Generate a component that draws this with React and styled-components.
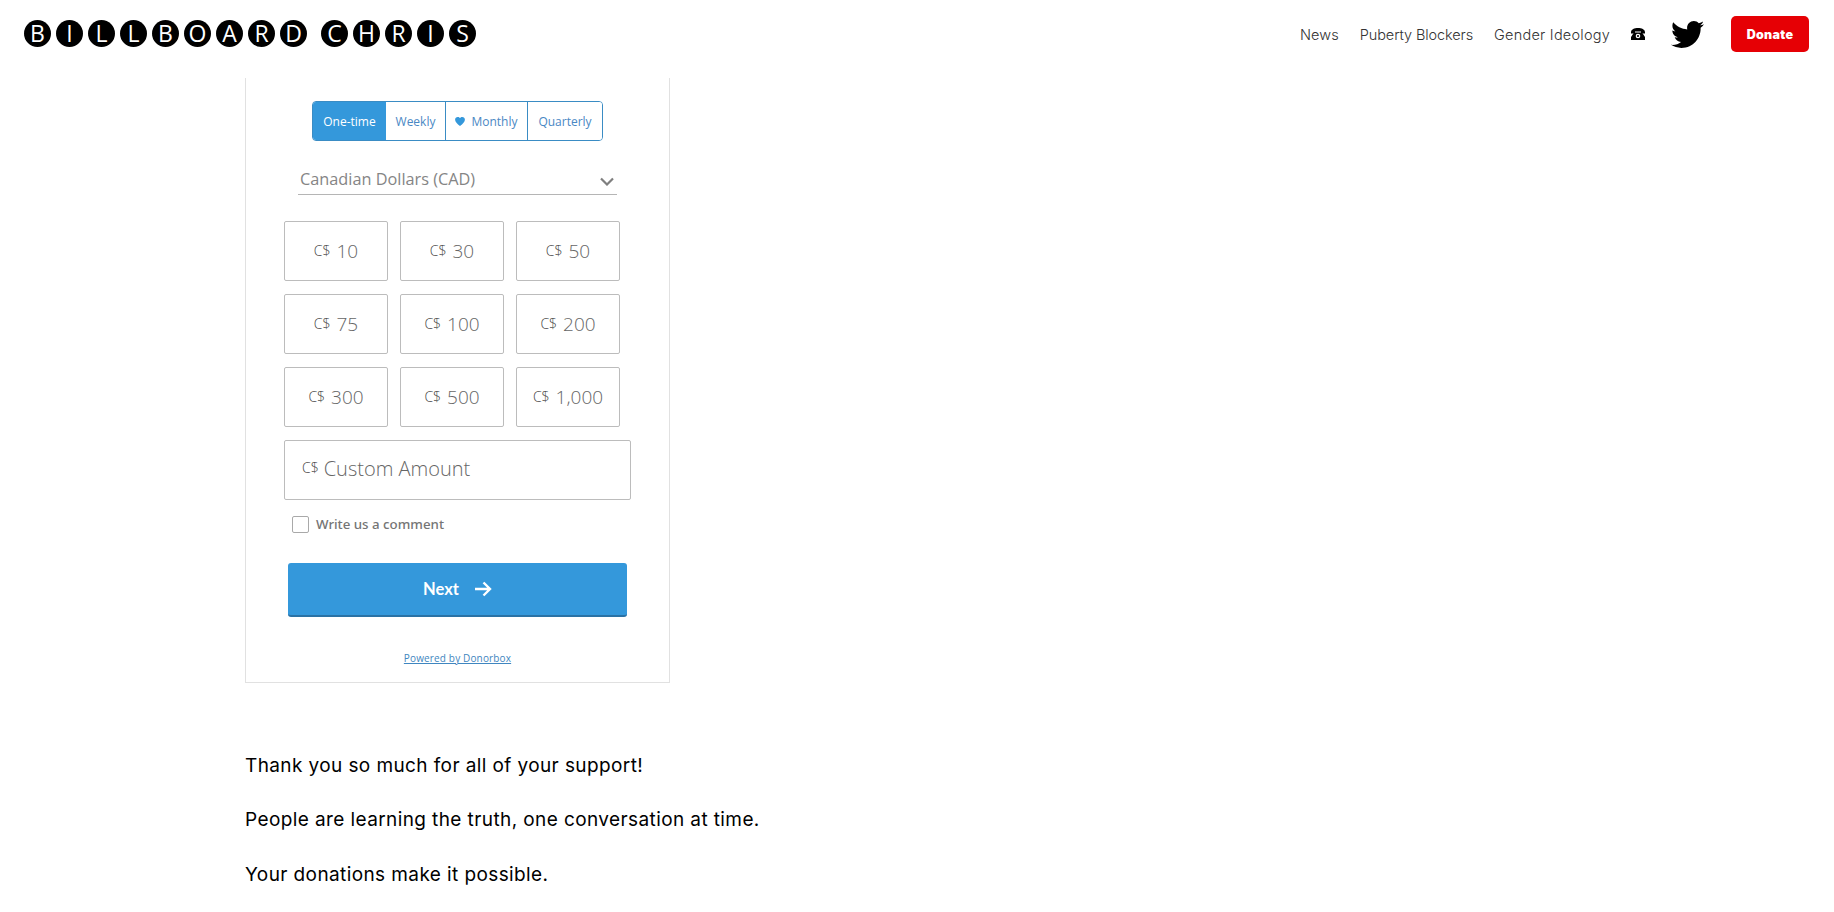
import React from "react";
import styled, { createGlobalStyle } from "styled-components";
import { FaTwitter } from "react-icons/fa";

const GlobalStyle = createGlobalStyle`
  html, body {
    margin: 0;
    padding: 0;
    background: #fff;
    overflow: hidden;
    font-family: "Inter", "Liberation Sans", sans-serif;
  }
`;

const Page = styled.div`
  height: 912px;
  overflow: hidden;
`;

// Header
const Header = styled.header`
  height: 78px;
  display: flex;
  align-items: flex-start;
  justify-content: space-between;
  padding: 0 25px 0 24px;
  box-sizing: border-box;
`;

const Logo = styled.div`
  display: flex;
  gap: 5px;
  padding-top: 20px;
`;

const LogoWord = styled.div`
  display: flex;
  gap: 5px;
  margin-right: 9px;
`;

const LogoLetter = styled.span`
  width: 27px;
  height: 27px;
  border-radius: 50%;
  background: #000;
  color: #fff;
  display: flex;
  align-items: center;
  justify-content: center;
  font-family: "Open Sans", sans-serif;
  font-size: 23px;
  font-weight: 400;
  line-height: 1;
`;

const Nav = styled.nav`
  display: flex;
  align-items: center;
  height: 36px;
  margin-top: 16px;
`;

const NavLink = styled.a`
  font-family: "Inter", sans-serif;
  font-size: 14.5px;
  font-weight: 300;
  letter-spacing: ${(p) => p.$tracking}px;
  color: #333;
  margin-right: 21px;
  white-space: nowrap;
`;

const PhoneIcon = styled.svg`
  width: 14px;
  height: 12px;
  margin-right: 26px;
`;

const TwitterLink = styled.a`
  display: flex;
  color: #000;
  font-size: 33px;
  margin-right: 27px;
`;

const DonateButton = styled.a`
  width: 78px;
  height: 36px;
  border-radius: 5px;
  background: #e60005;
  color: #fff;
  font-family: "Inter", sans-serif;
  font-size: 12.5px;
  font-weight: 900;
  letter-spacing: 0.3px;
  display: flex;
  align-items: center;
  justify-content: center;
`;

// Donation widget
const Main = styled.main`
  padding-left: 245px;
`;

const Widget = styled.section`
  width: 425px;
  height: 605px;
  box-sizing: border-box;
  border: 1px solid #e1e1e1;
  border-top: 0;
  padding-top: 23px;
  display: flex;
  flex-direction: column;
  font-family: "Open Sans", sans-serif;
`;

const Tabs = styled.div`
  display: flex;
  align-self: center;
  height: 40px;
  box-sizing: border-box;
  border: 1px solid #3a8cc4;
  border-radius: 4px;
  overflow: hidden;
`;

const Tab = styled.div`
  width: ${(p) => p.$width}px;
  box-sizing: border-box;
  display: flex;
  align-items: center;
  justify-content: center;
  gap: 6px;
  font-size: 12px;
  color: ${(p) => (p.$active ? "#fff" : "#4a88c4")};
  background: ${(p) => (p.$active ? "#3498db" : "#fff")};
  border-right: ${(p) => (p.$last || p.$active ? "0" : "1px solid #3a8cc4")};
`;

const Currency = styled.div`
  margin: 13px 0 0 52px;
  width: 319px;
  height: 41px;
  box-sizing: border-box;
  border-bottom: 1px solid #b5b5b5;
  padding: 0 3px 4px 2px;
  display: flex;
  align-items: flex-end;
  justify-content: space-between;
  color: #858585;
  font-size: 16.3px;
  line-height: 22px;
`;

const Chevron = styled.svg`
  width: 14px;
  height: 9px;
  margin-bottom: 4px;
`;

const Amounts = styled.div`
  margin: 26px 0 0 38px;
  display: grid;
  grid-template-columns: repeat(3, 104px);
  grid-auto-rows: 60px;
  gap: 13px 12px;
`;

const AmountBox = styled.div`
  box-sizing: border-box;
  border: 1px solid #bcbcbc;
  border-radius: 2px;
  display: flex;
  align-items: center;
  gap: ${(p) => (p.$wide ? "5px" : "6px")};
  color: #666;
  font-size: ${(p) => (p.$wide ? "20px" : "19px")};
  font-weight: 300;
  grid-column: ${(p) => (p.$wide ? "1 / -1" : "auto")};
  width: ${(p) => (p.$wide ? "347px" : "auto")};
  justify-content: ${(p) => (p.$wide ? "flex-start" : "center")};
  padding: ${(p) => (p.$wide ? "0 0 3px 17px" : "0")};
`;

const Symbol = styled.span`
  font-size: 14px;
  font-weight: 300;
  color: #444;
  position: relative;
  top: -1px;
`;

const CommentRow = styled.label`
  margin: 15px 0 0 46px;
  display: flex;
  align-items: center;
  gap: 7px;
  font-family: "Noto Sans", sans-serif;
  font-size: 13.3px;
  font-weight: 500;
  color: #757575;
`;

const Checkbox = styled.span`
  width: 17px;
  height: 17px;
  box-sizing: border-box;
  border: 1px solid #a9a9a9;
  border-radius: 2px;
`;

const NextButton = styled.button`
  margin: 30px 0 0 42px;
  width: 339px;
  height: 54px;
  border: 0;
  border-bottom: 2px solid #2a72a5;
  border-radius: 3px;
  background: #3498db;
  color: #fff;
  font-family: "Lato", sans-serif;
  font-size: 16.5px;
  font-weight: 700;
  display: flex;
  align-items: center;
  justify-content: center;
  gap: 15px;
`;

const Powered = styled.a`
  align-self: center;
  margin-top: 34px;
  font-size: 10px;
  letter-spacing: 0.15px;
  color: #3f86c0;
  text-decoration: underline;
`;

const Thanks = styled.div`
  margin-top: 69px;
  font-family: "Inter", sans-serif;
  font-size: 19px;
  font-weight: 400;
  letter-spacing: 0.4px;
  color: #000;
`;

const Line = styled.p`
  margin: 0;
  height: 54.3px;
  line-height: 27px;
`;

const words = [
  ["B", "I", "L", "L", "B", "O", "A", "R", "D"],
  ["C", "H", "R", "I", "S"],
];
const amounts = ["10", "30", "50", "75", "100", "200", "300", "500", "1,000"];

const Phone = () => (
  <PhoneIcon viewBox="0 0 14 12" aria-hidden="true">
    <path d="M0 4.200C0 1.400 3.400 0 7 0s7 1.400 7 4.200V5.500H10V3.400H4V5.500H0z" fill="#000" />
    <path d="M3 4.600h8L14 9v3H0V9z" fill="#000" />
    <circle cx="7" cy="8" r="2.300" fill="#fff" />
    <circle cx="7" cy="8" r="1.100" fill="#000" />
  </PhoneIcon>
);

const App = () => (
  <Page>
    <GlobalStyle />
    <Header>
      <Logo>
        {words.map((word, i) => (
          <LogoWord key={i}>
            {word.map((letter, j) => (
              <LogoLetter key={j}>{letter}</LogoLetter>
            ))}
          </LogoWord>
        ))}
      </Logo>
      <Nav>
        <NavLink $tracking={0.1}>News</NavLink>
        <NavLink $tracking={-0.1}>Puberty Blockers</NavLink>
        <NavLink $tracking={0.23}>Gender Ideology</NavLink>
        <Phone />
        <TwitterLink>
          <FaTwitter />
        </TwitterLink>
        <DonateButton>Donate</DonateButton>
      </Nav>
    </Header>
    <Main>
      <Widget>
        <Tabs>
          <Tab $width={73} $active>One-time</Tab>
          <Tab $width={60}>Weekly</Tab>
          <Tab $width={82}>
            <svg width="10" height="9" viewBox="0 0 24 22" aria-hidden="true">
              <path
                d="M12 22C5 16 0 12 0 6.500 0 2.800 2.800 0 6.500 0 8.800 0 11 1.200 12 3c1-1.800 3.200-3 5.500-3C21.200 0 24 2.800 24 6.500 24 12 19 16 12 22z"
                fill="#3498db"
              />
            </svg>
            Monthly
          </Tab>
          <Tab $width={74} $last>Quarterly</Tab>
        </Tabs>
        <Currency>
          Canadian Dollars (CAD)
          <Chevron viewBox="0 0 14 9" aria-hidden="true">
            <path d="M1 1.500l6 6 6-6" fill="none" stroke="#7f7f7f" strokeWidth="2.200" />
          </Chevron>
        </Currency>
        <Amounts>
          {amounts.map((a) => (
            <AmountBox key={a}>
              <Symbol>C$</Symbol>
              {a}
            </AmountBox>
          ))}
          <AmountBox $wide>
            <Symbol>C$</Symbol>
            Custom Amount
          </AmountBox>
        </Amounts>
        <CommentRow>
          <Checkbox />
          Write us a comment
        </CommentRow>
        <NextButton>
          Next
          <svg width="18" height="16" viewBox="0 0 18 16" aria-hidden="true">
            <path d="M1 8h15M9.500 1.500L16 8l-6.500 6.500" fill="none" stroke="#fff" strokeWidth="2.400" />
          </svg>
        </NextButton>
        <Powered>Powered by Donorbox</Powered>
      </Widget>
      <Thanks>
        <Line>Thank you so much for all of your support!</Line>
        <Line>People are learning the truth, one conversation at time.</Line>
        <Line>Your donations make it possible.</Line>
      </Thanks>
    </Main>
  </Page>
);

export default App;
